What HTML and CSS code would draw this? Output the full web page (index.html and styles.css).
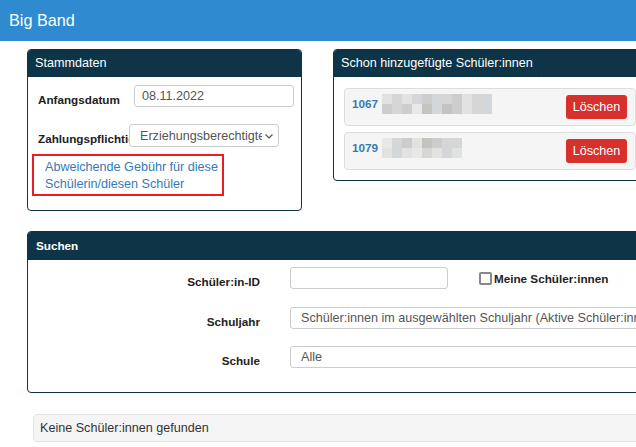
FILE: index.html
```html
<!DOCTYPE html>
<html lang="de">
<head>
  <meta charset="UTF-8">
  <meta name="viewport" content="width=device-width, initial-scale=1.0">
  <title>Big Band</title>
  <link rel="stylesheet" href="styles.css">
</head>
<body>

  <header class="topbar">Big Band</header>

  <main class="page">
    <div class="top-row">

      <!-- Stammdaten -->
      <section class="panel panel-master">
        <div class="panel-heading">Stammdaten</div>
        <div class="master-body">
          <div class="field-row">
            <label class="field-label label-start" for="start-date">Anfangsdatum</label>
            <input id="start-date" class="form-control date-input" type="text" value="08.11.2022">
          </div>
          <div class="field-row payer-row">
            <label class="field-label label-payer" for="payer">Zahlungspflichtig</label>
            <span class="select-wrap">
              <select id="payer" class="form-control payer-select">
                <option>Erziehungsberechtigte</option>
              </select>
              <svg class="caret" viewBox="0 0 8 5" width="8" height="5"><path d="M0.5 0.5 L4 4 L7.5 0.5" fill="none" stroke="#555" stroke-width="1.2"/></svg>
            </span>
          </div>
          <a class="fee-link" href="#">Abweichende Gebühr für diese Schülerin/diesen Schüler</a>
        </div>
      </section>

      <!-- bereits hinzugefügt -->
      <section class="panel panel-added">
        <div class="panel-heading">Schon hinzugefügte Schüler:innen</div>
        <div class="added-body">
          <div class="student-item">
            <span class="student-id">1067</span>
            <span class="blur blur-11">
              <i class="g3"></i><i class="g1"></i><i class="g3"></i><i class="g5"></i><i class="g2"></i><i class="g5"></i><i class="g1"></i><i class="g2"></i><i class="g3"></i><i class="g1"></i><i class="g5"></i>
              <i class="g2"></i><i class="g1"></i><i class="g2"></i><i class="g6"></i><i class="g4"></i><i class="g5"></i><i class="g4"></i><i class="g2"></i><i class="g3"></i><i class="g1"></i><i class="g5"></i>
            </span>
            <button class="btn-delete">Löschen</button>
          </div>
          <div class="student-item">
            <span class="student-id">1079</span>
            <span class="blur blur-8">
              <i class="g6"></i><i class="g1"></i><i class="g2"></i><i class="g3"></i><i class="g4"></i><i class="g2"></i><i class="g1"></i><i class="g5"></i>
              <i class="g3"></i><i class="g5"></i><i class="g3"></i><i class="g6"></i><i class="g1"></i><i class="g3"></i><i class="g5"></i><i class="g3"></i>
            </span>
            <button class="btn-delete">Löschen</button>
          </div>
        </div>
      </section>

    </div>

    <!-- Suchen -->
    <section class="panel panel-search">
      <div class="panel-heading heading-bold">Suchen</div>
      <div class="search-body">
        <div class="search-row">
          <label class="search-label" for="student-id">Schüler:in-ID</label>
          <input id="student-id" class="form-control search-input" type="text">
          <label class="my-students">
            <input type="checkbox" class="check">
            <span>Meine Schüler:innen</span>
          </label>
        </div>
        <div class="search-row row-year">
          <label class="search-label" for="year">Schuljahr</label>
          <select id="year" class="form-control search-select">
            <option>Schüler:innen im ausgewählten Schuljahr (Aktive Schüler:innen)</option>
          </select>
        </div>
        <div class="search-row row-school">
          <label class="search-label" for="school">Schule</label>
          <select id="school" class="form-control search-select">
            <option>Alle</option>
          </select>
        </div>
      </div>
    </section>

    <div class="well">Keine Schüler:innen gefunden</div>
  </main>

</body>
</html>
```

FILE: styles.css
```css
html, body {
  margin: 0;
  padding: 0;
  overflow: hidden;
}

body {
  font-family: "Liberation Sans", Arial, sans-serif;
  font-size: 12.6px;
  color: #333;
  background: #fff;
}

.topbar {
  height: 41px;
  line-height: 41px;
  padding-left: 9px;
  background: #2f8acf;
  color: #fff;
  font-size: 16.2px;
}

.page {
  width: 900px;
  padding: 8px 0 0 27px;
}

.top-row {
  display: flex;
  align-items: flex-start;
  gap: 31px;
}

/* panels */
.panel {
  flex-shrink: 0;
  box-sizing: border-box;
  border: 1px solid #0d3547;
  border-radius: 4px;
  background: #fff;
  overflow: hidden;
}

.panel-heading {
  height: 27px;
  line-height: 27px;
  padding: 0 7px;
  background: #0d3547;
  color: #fff;
}

.heading-bold {
  height: 28px;
  line-height: 28px;
  padding: 0 8px;
  font-weight: bold;
  font-size: 11.7px;
}

.form-control {
  flex-shrink: 0;
  box-sizing: border-box;
  height: 22px;
  border: 1px solid #ccc;
  border-radius: 3px;
  background: #fff;
  color: #555;
  font-family: inherit;
  font-size: 12.6px;
  outline: none;
}

select.form-control {
  appearance: none;
  -webkit-appearance: none;
}

/* Stammdaten */
.panel-master {
  width: 275px;
}

.master-body {
  padding: 8px 10px 14px;
}

.field-row {
  display: flex;
  align-items: flex-start;
}

.field-label {
  flex-shrink: 0;
  font-weight: bold;
  font-size: 11.7px;
  line-height: 14px;
  white-space: nowrap;
  color: #222;
}

.label-start {
  width: 96px;
  padding-top: 8px;
}

.date-input {
  width: 160px;
  padding: 0 7px;
}

.payer-row {
  margin-top: 17px;
}

.label-payer {
  width: 91px;
  overflow: hidden;
  padding-top: 8px;
}

.select-wrap {
  position: relative;
  display: inline-block;
  flex-shrink: 0;
}

.payer-select {
  width: 150px;
  height: 23px;
  padding: 0 16px 0 10px;
}

.caret {
  position: absolute;
  right: 6px;
  top: 10px;
}

.fee-link {
  display: block;
  box-sizing: border-box;
  width: 192px;
  margin: 7px 0 0 -6px;
  padding: 3px 4px 1px 11px;
  border: 2px solid #ed1c24;
  color: #337ab7;
  text-decoration: none;
  line-height: 17px;
}

/* Schon hinzugefügt */
.panel-added {
  width: 314px;
}

.added-body {
  display: flex;
  flex-direction: column;
  gap: 6px;
  padding: 11px 10px 10px;
}

.student-item {
  display: flex;
  align-items: flex-start;
  box-sizing: border-box;
  height: 38px;
  padding: 5px 8px 0 7px;
  border: 1px solid #ddd;
  border-radius: 4px;
  background: #f5f5f5;
}

.student-id {
  font-weight: bold;
  font-size: 11.7px;
  line-height: 20px;
  color: #337ab7;
}

.blur {
  display: grid;
  grid-auto-rows: 10px;
  margin-left: 4px;
}

.blur-11 {
  grid-template-columns: repeat(11, 10px);
}

.blur-8 {
  grid-template-columns: repeat(8, 10px);
}

.g1 { background: #d6d6d6; }
.g2 { background: #cdcdcd; }
.g3 { background: #e2e2e1; }
.g4 { background: #c3c3c0; }
.g5 { background: #d4d7da; }
.g6 { background: #e8e8e6; }

.btn-delete {
  margin: 1px 0 0 auto;
  width: 61px;
  height: 24px;
  padding: 0;
  border: 0;
  border-radius: 3px;
  background: #d7302d;
  color: #fff;
  font-family: inherit;
  font-size: 12.6px;
}

/* Suchen */
.panel-search {
  width: 888px;
  margin-top: 20px;
}

.search-body {
  padding: 7px 10px 24px;
}

.search-row {
  display: flex;
  align-items: flex-start;
}

.row-year {
  margin-top: 18px;
}

.row-school {
  margin-top: 17px;
}

.search-label {
  flex-shrink: 0;
  width: 222px;
  margin-right: 30px;
  padding-top: 8px;
  text-align: right;
  font-weight: bold;
  font-size: 11.7px;
  line-height: 14px;
  color: #222;
}

.search-input {
  width: 158px;
}

.my-students {
  display: flex;
  align-items: center;
  gap: 2px;
  margin: 5px 0 0 31px;
  font-weight: bold;
  font-size: 11.7px;
  color: #222;
}

.check {
  appearance: none;
  -webkit-appearance: none;
  box-sizing: border-box;
  width: 13px;
  height: 13px;
  margin: 0;
  border: 2px solid #87878c;
  border-radius: 2px;
  background: #fff;
}

.search-select {
  width: 520px;
  padding: 0 10px;
}

/* Ergebnis */
.well {
  box-sizing: border-box;
  width: 880px;
  height: 28px;
  margin: 21px 0 0 6px;
  padding: 0 6px;
  line-height: 26px;
  border: 1px solid #e3e3e3;
  border-radius: 4px;
  background: #f5f5f5;
}
```
